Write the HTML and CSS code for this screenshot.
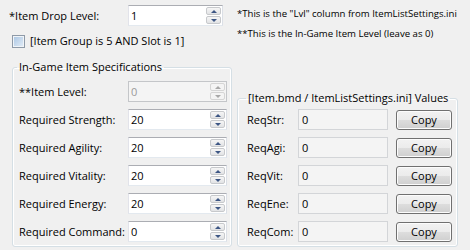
FILE: index.html
```html
<!doctype html>
<html>
    <head>
        <meta charset="utf-8">
        <title>Item Requirements</title>
        <link rel="stylesheet" href="styles.css">
    </head>
    <body>
        <div id="head">
            <div class="head-left">
                <div class="drop-row">
                    <label class="drop-label">*Item Drop Level:</label>
                    <div class="spin drop-spin">
                        <span class="spin-value">1</span>
                        <span class="spin-buttons"><span class="up"></span><span class="down"></span></span>
                    </div>
                </div>
                <label class="check"><span class="check-box"></span>[Item Group is 5 AND Slot is 1]</label>
            </div>
            <div class="notes">
                <div>*This is the "Lvl" column from ItemListSettings.ini</div>
                <div>**This is the In-Game Item Level (leave as 0)</div>
            </div>
        </div>

        <div id="groups">
            <fieldset class="group specs">
                <legend>In-Game Item Specifications</legend>
                <div class="spec-row">
                    <label>**Item Level:</label>
                    <div class="spin disabled">
                        <span class="spin-value">0</span>
                        <span class="spin-buttons"><span class="up"></span><span class="down"></span></span>
                    </div>
                </div>
                <div class="spec-row">
                    <label>Required Strength:</label>
                    <div class="spin"><span class="spin-value">20</span><span class="spin-buttons"><span class="up"></span><span class="down"></span></span></div>
                </div>
                <div class="spec-row">
                    <label>Required Agility:</label>
                    <div class="spin"><span class="spin-value">20</span><span class="spin-buttons"><span class="up"></span><span class="down"></span></span></div>
                </div>
                <div class="spec-row">
                    <label>Required Vitality:</label>
                    <div class="spin"><span class="spin-value">20</span><span class="spin-buttons"><span class="up"></span><span class="down"></span></span></div>
                </div>
                <div class="spec-row">
                    <label>Required Energy:</label>
                    <div class="spin"><span class="spin-value">20</span><span class="spin-buttons"><span class="up"></span><span class="down"></span></span></div>
                </div>
                <div class="spec-row">
                    <label>Required Command:</label>
                    <div class="spin"><span class="spin-value">0</span><span class="spin-buttons"><span class="up"></span><span class="down"></span></span></div>
                </div>
            </fieldset>

            <fieldset class="group values">
                <legend>[Item.bmd / ItemListSettings.ini] Values</legend>
                <div class="value-row"><label>ReqStr:</label><span class="readonly">0</span><button type="button">Copy</button></div>
                <div class="value-row"><label>ReqAgi:</label><span class="readonly">0</span><button type="button">Copy</button></div>
                <div class="value-row"><label>ReqVit:</label><span class="readonly">0</span><button type="button">Copy</button></div>
                <div class="value-row"><label>ReqEne:</label><span class="readonly">0</span><button type="button">Copy</button></div>
                <div class="value-row"><label>ReqCom:</label><span class="readonly">0</span><button type="button">Copy</button></div>
            </fieldset>
        </div>
    </body>
</html>
```

FILE: styles.css
```css
html {
    padding: 0;
    margin: 0;
}
body {
    margin: 0;
    padding: 0;
    width: 470px;
    height: 250px;
    overflow: hidden;
    background: #f0f0f0;
    color: #000;
    font-family: "Open Sans", sans-serif;
    font-size: 11px;
}

#head {
    display: flex;
    padding-top: 4px;
    height: 55px;
}
.head-left {
    width: 228px;
    padding-left: 9px;
    box-sizing: border-box;
}
.drop-row {
    display: flex;
    align-items: center;
    margin-top: 1px;
}
.drop-label {
    width: 119px;
}
.drop-spin {
    width: 95px;
    height: 22px;
}
.check {
    display: flex;
    align-items: center;
    margin-top: 7px;
    margin-left: 3px;
    line-height: 16px;
}
.check-box {
    width: 11px;
    height: 11px;
    margin-right: 5px;
    border: solid 1px #8e9aa8;
    box-shadow: inset 0 0 0 1px #f0f4f8;
    background: linear-gradient(135deg, #a8c4e2, #e4eef8);
}
.notes {
    padding-left: 9px;
    font-size: 9.6px;
    line-height: 20px;
    white-space: nowrap;
}

/* numeric up/down */
.spin {
    display: flex;
    box-sizing: border-box;
    height: 21px;
    background: #fff;
    border: solid 1px;
    border-color: #abadb3 #dbdfe6 #e3e9ef #e2e3ea;
}
.spin-value {
    flex: 1;
    padding-left: 2px;
    line-height: 19px;
}
.spin-buttons {
    display: flex;
    flex-direction: column;
    width: 15px;
    padding: 1px 1px 1px 0;
}
.spin-buttons span {
    flex: 1;
    margin-bottom: 1px;
    border: solid 1px #c7c9cc;
    border-radius: 2px;
    background: linear-gradient(180deg, #f6f6f6, #e2e3e5);
    position: relative;
}
.spin-buttons span:last-child {
    margin-bottom: 0;
}
.spin-buttons span::after {
    content: "";
    position: absolute;
    left: 4px;
    top: 2px;
    border-left: 3px solid transparent;
    border-right: 3px solid transparent;
}
.spin-buttons .up::after {
    border-bottom: 3px solid #3d5684;
}
.spin-buttons .down::after {
    border-top: 3px solid #3d5684;
}
.spin.disabled {
    background: #f4f4f4;
    border-color: #c4c6c9;
    color: #9a9a9a;
}
.spin.disabled .spin-buttons span {
    background: #f4f4f4;
    border-color: #d5d5d5;
}
.spin.disabled .up::after {
    border-bottom-color: #a8a8a8;
}
.spin.disabled .down::after {
    border-top-color: #a8a8a8;
}

/* group boxes */
#groups {
    display: flex;
    align-items: flex-end;
    padding-left: 12px;
}
.group {
    margin: 0;
    border: solid 1px #d5dfe5;
    border-radius: 3px;
    box-shadow: inset 0 0 0 1px #fff;
}
.group legend {
    padding: 0 2px;
    margin-left: -2px;
    line-height: 16px;
}
.specs {
    width: 220px;
    box-sizing: border-box;
    padding: 6px 4px 4px 6px;
}
.values {
    width: 221px;
    box-sizing: border-box;
    margin-left: 5px;
    padding: 3px 5px 4px 9px;
}
.values legend {
    margin-left: -1px;
}

.spec-row, .value-row {
    display: flex;
    align-items: center;
    height: 21px;
    margin-bottom: 7px;
}
.spec-row:last-child, .value-row:last-child {
    margin-bottom: 0;
}
.spec-row label {
    width: 109px;
    white-space: nowrap;
}
.spec-row .spin {
    width: 99px;
}

.value-row label {
    width: 51px;
}
.readonly {
    box-sizing: border-box;
    width: 90px;
    height: 21px;
    padding-left: 3px;
    line-height: 19px;
    background: #f4f4f4;
    border: solid 1px #d3d5d8;
}
button {
    box-sizing: border-box;
    width: 56px;
    height: 20px;
    margin-left: 8px;
    padding: 0;
    font-family: inherit;
    font-size: 11px;
    color: #000;
    border: solid 1px #707070;
    border-radius: 3px;
    box-shadow: inset 0 0 0 1px #fcfcfc;
    background: linear-gradient(180deg, #f2f2f2 0, #ebebeb 50%, #dddddd 51%, #cfcfcf 100%);
}
```
